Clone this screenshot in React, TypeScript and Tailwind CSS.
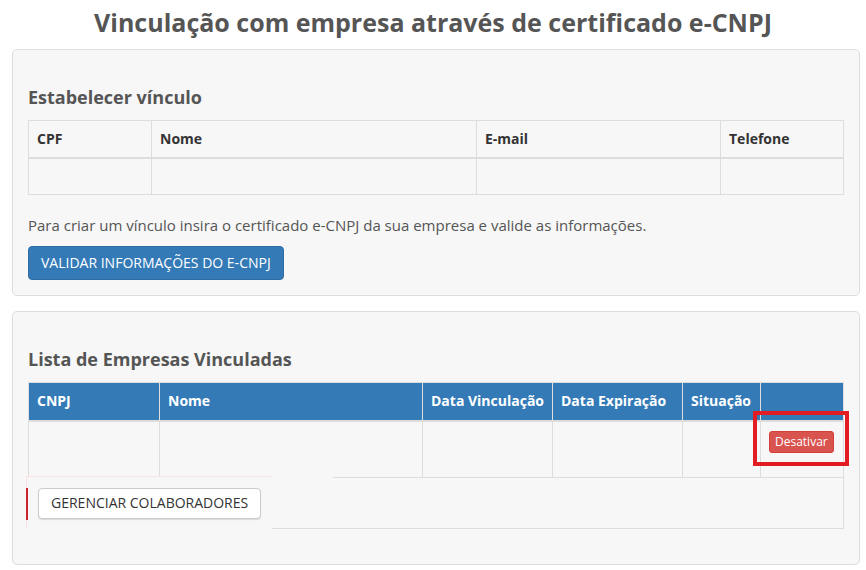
export default function App() {
  const headers1 = ["CPF", "Nome", "E-mail", "Telefone"]
  const widths1 = ["w-[123px]", "w-[325px]", "w-[244px]", "w-[123px]"]
  const headers2 = ["CNPJ", "Nome", "Data Vinculação", "Data Expiração", "Situação", ""]
  const widths2 = ["w-[131px]", "w-[263px]", "w-[130px]", "w-[130px]", "w-[78px]", "w-[83px]"]

  return (
    <div className="min-h-[570px] bg-white font-['Open_Sans',sans-serif] text-[14px] leading-[20px] text-[#555]">
      <h1 className="pt-[7px] text-center text-[25px] leading-[31px] font-bold text-[#555]">
        Vinculação com empresa através de certificado e-CNPJ
      </h1>

      {/* painel 1 */}
      <section className="mt-[11px] ml-[12px] mr-[6px] rounded-[5px] border border-[#ddd] bg-[#f7f7f7] pl-[15px] pr-[16px] pt-[37px] pb-[15px]">
        <h4 className="text-[18px] leading-[20px] font-bold text-[#555]">Estabelecer vínculo</h4>
        <table className="mt-[13px] w-[815px] table-fixed border-collapse">
          <colgroup>
            {widths1.map((w, i) => (
              <col key={i} className={w} />
            ))}
          </colgroup>
          <thead>
            <tr>
              {headers1.map((h) => (
                <th
                  key={h}
                  className="h-[37px] border border-b-2 border-[#ddd] px-[8px] text-left align-middle font-bold text-[#333]"
                >
                  {h}
                </th>
              ))}
            </tr>
          </thead>
          <tbody>
            <tr>
              {headers1.map((h) => (
                <td key={h} className="h-[37px] border border-[#ddd] px-[8px]"></td>
              ))}
            </tr>
          </tbody>
        </table>
        <p className="mt-[20px] text-[15px] leading-[21px] text-[#555]">
          Para criar um vínculo insira o certificado e-CNPJ da sua empresa e valide as informações.
        </p>
        <button className="mt-[10px] h-[34px] rounded-[4px] border border-[#2e6da4] bg-[#337ab7] px-[12px] text-[14px] leading-[20px] text-white">
          VALIDAR INFORMAÇÕES DO E-CNPJ
        </button>
      </section>

      {/* painel 2 */}
      <section className="mt-[15px] ml-[12px] mr-[6px] rounded-[5px] border border-[#ddd] bg-[#f7f7f7] pl-[15px] pr-[16px] pt-[37px] pb-[35px]">
        <h4 className="text-[18px] leading-[20px] font-bold text-[#555]">Lista de Empresas Vinculadas</h4>
        <div className="relative mt-[13px] w-[815px]">
          <table className="w-[815px] table-fixed border-collapse">
            <colgroup>
              {widths2.map((w, i) => (
                <col key={i} className={w} />
              ))}
            </colgroup>
            <thead>
              <tr className="bg-[#337ab7]">
                {headers2.map((h, i) => (
                  <th
                    key={i}
                    className="h-[38px] whitespace-nowrap border border-b-2 border-[#ddd] px-[8px] text-left align-middle font-bold text-white"
                  >
                    {h}
                  </th>
                ))}
              </tr>
            </thead>
            <tbody>
              <tr>
                {headers2.map((h, i) => (
                  <td key={i} className="h-[57px] border border-[#ddd] px-[8px] pt-[9px] align-top">
                    {i === 5 && (
                      <button className="h-[22px] rounded-[3px] border border-[#d43f3a] bg-[#d9534f] px-[5px] text-[12px] leading-[16px] text-white">
                        Desativar
                      </button>
                    )}
                  </td>
                ))}
              </tr>
              <tr>
                <td colSpan={6} className="h-[51px] border border-[#ddd] px-[9px] align-middle">
                  <button className="relative z-10 h-[31px] rounded-[4px] border border-[#ccc] bg-white px-[12px] text-[14px] leading-[20px] text-[#333] shadow-[0_1px_1px_rgba(0,0,0,0.12)]">
                    GERENCIAR COLABORADORES
                  </button>
                </td>
              </tr>
            </tbody>
          </table>

          {/* recorte colado sobre a linha */}
          <div className="absolute left-[-2px] top-[94px] h-[53px] w-[246px] border-t border-l border-[#fbe1e1] bg-[#f7f7f7]" />
          <div className="absolute left-[-2px] top-[106px] h-[32px] w-[2px] bg-[#c9252c]" />
          <div className="absolute left-[244px] top-[94px] h-[2px] w-[61px] bg-[#f7f7f7]" />

          {/* destaque vermelho */}
          <div className="absolute left-[725px] top-[29px] h-[55px] w-[96px] border-4 border-[#e31b23]" />
        </div>
      </section>
    </div>
  )
}
